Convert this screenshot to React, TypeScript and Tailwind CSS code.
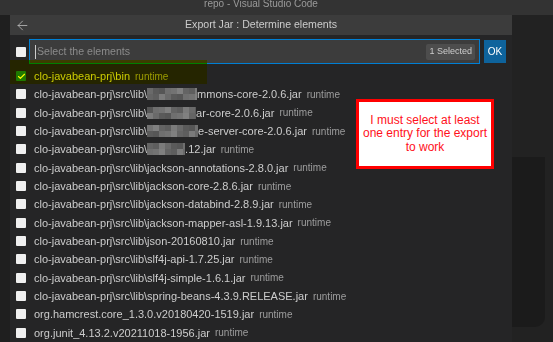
import React from 'react';
import { ArrowLeft, Check } from 'lucide-react';

type Row = {
  prefix: string;
  blur?: number;
  suffix?: string;
  checked?: boolean;
};

const rows: Row[] = [
  { prefix: 'clo-javabean-prj\\bin', checked: true },
  { prefix: 'clo-javabean-prj\\src\\lib\\', blur: 50, suffix: 'mmons-core-2.0.6.jar' },
  { prefix: 'clo-javabean-prj\\src\\lib\\', blur: 49, suffix: 'ar-core-2.0.6.jar' },
  { prefix: 'clo-javabean-prj\\src\\lib\\', blur: 51, suffix: 'e-server-core-2.0.6.jar' },
  { prefix: 'clo-javabean-prj\\src\\lib\\', blur: 38, suffix: '.12.jar' },
  { prefix: 'clo-javabean-prj\\src\\lib\\jackson-annotations-2.8.0.jar' },
  { prefix: 'clo-javabean-prj\\src\\lib\\jackson-core-2.8.6.jar' },
  { prefix: 'clo-javabean-prj\\src\\lib\\jackson-databind-2.8.9.jar' },
  { prefix: 'clo-javabean-prj\\src\\lib\\jackson-mapper-asl-1.9.13.jar' },
  { prefix: 'clo-javabean-prj\\src\\lib\\json-20160810.jar' },
  { prefix: 'clo-javabean-prj\\src\\lib\\slf4j-api-1.7.25.jar' },
  { prefix: 'clo-javabean-prj\\src\\lib\\slf4j-simple-1.6.1.jar' },
  { prefix: 'clo-javabean-prj\\src\\lib\\spring-beans-4.3.9.RELEASE.jar' },
  { prefix: 'org.hamcrest.core_1.3.0.v20180420-1519.jar' },
  { prefix: 'org.junit_4.13.2.v20211018-1956.jar' },
];

const greys = ['#5e5e5e', '#6a6a6a', '#565656', '#737373', '#646464', '#7b7b7b', '#5a5a5a', '#6f6f6f', '#808080'];

// pixelated (redacted) part of a file name
function Mosaic({ w, seed }: { w: number; seed: number }) {
  const cols = Math.ceil(w / 6);
  return (
    <span className="inline-flex flex-col h-[12px] overflow-hidden align-middle" style={{ width: w }}>
      {[0, 1].map((r) => (
        <span key={r} className="flex h-[6px]">
          {Array.from({ length: cols }).map((_, c) => (
            <span
              key={c}
              className="h-[6px] w-[6px] shrink-0"
              style={{ backgroundColor: greys[(c * 5 + r * 3 + seed) % greys.length] }}
            />
          ))}
        </span>
      ))}
    </span>
  );
}

export default function App() {
  return (
    <div className="relative w-[553px] h-[342px] overflow-hidden bg-[#1f1f1f] font-['Liberation_Sans',Arial,sans-serif]">
      {/* window title */}
      <div className="flex h-[15px] bg-[#333333] overflow-hidden">
        <div className="w-[10px]" />
        <div className="w-[502px] text-center text-[10px] leading-none text-[#9a9a9a] -mt-px">repo - Visual Studio Code</div>
      </div>

      <div className="flex h-[327px]">
        <div className="w-[10px] bg-[#1f1f1f]" />

        {/* quick pick */}
        <div className="w-[502px] flex flex-col bg-[#252526]">
          <div className="flex items-center h-[20px] bg-[#3c3c3c]">
            <div className="w-[30px] pl-[5px] text-[#c5c5c5]">
              <ArrowLeft size={15} strokeWidth={1.2} />
            </div>
            <div className="flex-1 text-center text-[10.6px] text-[#cccccc]">Export Jar : Determine elements</div>
            <div className="w-[30px]" />
          </div>

          <div className="flex items-center pt-[4px] h-[29px] pl-[6px] pr-[6px]">
            <div className="w-[10px] h-[10px] bg-[#f0f0f0] rounded-[1px]" />
            <div className="ml-[3px] w-[451px] h-[25px] bg-[#3c3c3c] border border-[#007fd4] flex items-center pl-[5px] pr-[4px]">
              <span className="w-px h-[14px] bg-[#cccccc]" />
              <span className="ml-px text-[10.6px] text-[#8b8b8b]">Select the elements</span>
              <span className="ml-auto h-[16px] px-[3px] flex items-center rounded-[2px] bg-[#4d4d4d] text-[9px] text-[#cccccc]">1 Selected</span>
            </div>
            <div className="ml-[4px] w-[22px] h-[23px] bg-[#0e639c] flex items-center justify-center text-[10px] text-white">OK</div>
          </div>

          <div className="mt-[3px] flex flex-col">
            {rows.map((r, i) => (
              <div key={i} className="flex items-center h-[18.33px] pl-[6px] whitespace-nowrap">
                {r.checked ? (
                  <div className="w-[10px] h-[10px] bg-[#1e7ad0] rounded-[1px] flex items-center justify-center text-white">
                    <Check size={9} strokeWidth={3} />
                  </div>
                ) : (
                  <div className="w-[10px] h-[10px] bg-[#f0f0f0] rounded-[1px]" />
                )}
                <span className="ml-[8px] text-[11px] text-[#cccccc] flex items-center">
                  {r.prefix}
                  {r.blur ? <Mosaic w={r.blur} seed={i} /> : null}
                  {r.suffix}
                </span>
                <span className="ml-[5px] text-[10px] text-[#9d9d9d]">runtime</span>
              </div>
            ))}
          </div>
        </div>

        {/* editor behind, dimmed */}
        <div className="flex-1 flex bg-[#222222]">
          <div className="w-[33px] mt-[142px] h-[170px] bg-[#1b1b1b] rounded-br-[10px]" />
        </div>
      </div>

      {/* highlighter marking the selected entry */}
      <div className="absolute left-[10px] top-[60px] w-[197px] h-[24px] bg-[#ffff00] mix-blend-multiply" />

      {/* red callout */}
      <div className="absolute left-[356px] top-[99px] w-[138px] h-[70px] bg-white border-[3px] border-[#ff0000] flex items-center justify-center">
        <p className="text-center text-[12px] leading-[13.5px] text-[#ff1020]">
          I must select at least
          <br />
          one entry for the export
          <br />
          to work
        </p>
      </div>
    </div>
  );
}
